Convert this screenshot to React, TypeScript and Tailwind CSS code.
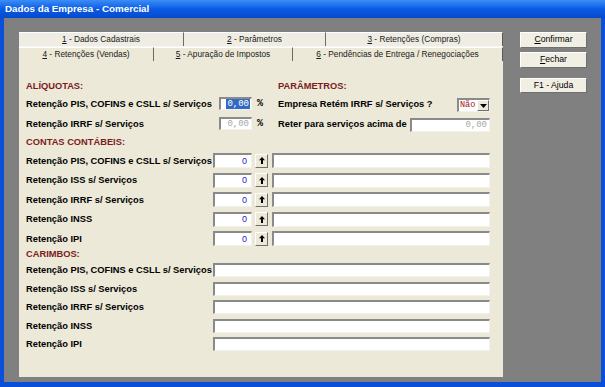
import React from 'react';

const sans = { fontFamily: '"Liberation Sans", Arial, sans-serif' };
const mono = { fontFamily: '"Liberation Mono", "Courier New", monospace' };

const sunken =
  'bg-white border-t-2 border-l-2 border-t-[#8a8a8a] border-l-[#8a8a8a] border-b border-r border-b-[#f2f1ea] border-r-[#f2f1ea]';
const raised =
  'bg-[#ECE9D8] border-t border-l border-t-white border-l-white border-b border-r border-b-[#6f6f6f] border-r-[#6f6f6f]';

const Header = ({ children }: { children: React.ReactNode }) => (
  <div className="h-[12px] leading-[12px] text-[9.3px] font-bold text-[#7b1c1c] whitespace-nowrap">{children}</div>
);

const Label = ({ children, w }: { children: React.ReactNode; w: string }) => (
  <div className={`${w} shrink-0 text-[9.3px] font-bold text-black whitespace-nowrap leading-[12px]`}>{children}</div>
);

const UpArrow = () => (
  <svg width="6" height="7" viewBox="0 0 6 7">
    <path d="M3 0 L6 3.3 H4 V7 H2 V3.3 H0 Z" fill="#000" />
  </svg>
);

const Tab = ({ n, text, w, last }: { n: string; text: string; w: string; last?: boolean }) => (
  <div
    className={`${w} h-full flex items-center justify-center text-[8.3px] text-[#1a1a1a] border-t border-t-white ${
      last ? 'border-r border-r-[#5a5a5a]' : 'border-r border-r-[#6a6a6a]'
    }`}
  >
    <span className="underline">{n}</span>
    <span>&nbsp;- {text}</span>
  </div>
);

const Button = ({ u, rest, h }: { u: string; rest: string; h: string }) => (
  <div className={`${raised} ${h} w-[67px] bg-[#F1EFE4] flex items-center justify-center text-[8.7px] text-black`}>
    <span className="underline">{u}</span>
    <span>{rest}</span>
  </div>
);

const contas = [
  'Retenção PIS, COFINS e CSLL s/ Serviços',
  'Retenção ISS s/ Serviços',
  'Retenção IRRF s/ Serviços',
  'Retenção INSS',
  'Retenção IPI',
];

export default function App() {
  return (
    <div className="w-[605px] h-[387px] flex flex-col bg-[#0A4FD8] overflow-hidden" style={sans}>
      {/* title bar */}
      <div className="h-[18px] shrink-0 bg-gradient-to-b from-[#3B8DF6] via-[#0A5BE6] to-[#0749CB] flex items-center pl-[5px]">
        <span className="text-white font-bold text-[9.8px] leading-none">Dados da Empresa - Comercial</span>
      </div>

      {/* client */}
      <div className="flex-1 flex ml-[4px] mr-[4px] mb-[5px] bg-[#808080] pl-[15px] pt-[14px]">
        {/* tab control */}
        <div className="w-[484px] flex flex-col h-[345px]">
          <div className="h-[15px] flex bg-[#EFEDE3] border-b border-b-[#f7f6f0]">
            <Tab n="1" text="Dados Cadastrais" w="w-[165px]" />
            <Tab n="2" text="Parâmetros" w="w-[142px]" />
            <Tab n="3" text="Retenções (Compras)" w="w-[177px]" last />
          </div>
          <div className="h-[14px] flex bg-[#ECE9D8]">
            <Tab n="4" text="Retenções (Vendas)" w="w-[135px]" />
            <Tab n="5" text="Apuração de Impostos" w="w-[139px]" />
            <Tab n="6" text="Pendências de Entrega /  Renegociações" w="w-[210px]" last />
          </div>

          {/* panel */}
          <div className="h-[316px] bg-[#ECE9D8] pl-[7px] pt-[19px] flex flex-col">
            {/* top section */}
            <div className="flex">
              <div className="w-[252px] flex flex-col">
                <Header>ALÍQUOTAS:</Header>
                <div className="flex items-center mt-[5px] h-[13px]">
                  <Label w="w-[193px]">Retenção PIS, COFINS e CSLL s/ Serviços</Label>
                  <div className={`${sunken} w-[33px] h-[13px] flex items-center justify-end pr-px`}>
                    <span className="bg-[#316AC5] text-white text-[9px] leading-[10px] px-px" style={mono}>
                      0,00
                    </span>
                  </div>
                  <span className="ml-[5px] text-[10px] font-bold" style={mono}>%</span>
                </div>
                <div className="flex items-center mt-[7px] h-[13px]">
                  <Label w="w-[193px]">Retenção IRRF s/ Serviços</Label>
                  <div className={`${sunken} w-[33px] h-[13px] flex items-center justify-end pr-[2px]`}>
                    <span className="text-[#a8a8a8] text-[9px] leading-[10px]" style={mono}>
                      0,00
                    </span>
                  </div>
                  <span className="ml-[5px] text-[10px] font-bold" style={mono}>%</span>
                </div>
              </div>

              <div className="w-[212px] flex flex-col">
                <Header>PARÂMETROS:</Header>
                <div className="flex items-center mt-[5px] h-[13px]">
                  <Label w="w-[179px]">Empresa Retém IRRF s/ Serviços ?</Label>
                  <div className={`${sunken} w-[33px] h-[14px] mt-[3px] flex items-center`}>
                    <span className="flex-1 text-[#a01010] text-[8.5px] leading-none pl-px" style={mono}>
                      Não
                    </span>
                    <div className={`${raised} w-[12px] h-full flex items-center justify-center`}>
                      <svg width="7" height="4" viewBox="0 0 7 4">
                        <path d="M0 0 H7 L3.5 4 Z" fill="#000" />
                      </svg>
                    </div>
                  </div>
                </div>
                <div className="flex items-center mt-[7px] h-[13px]">
                  <Label w="w-[132px]">Reter para serviços acima de</Label>
                  <div className={`${sunken} w-[80px] h-[14px] mt-[2px] flex items-center justify-end pr-[2px]`}>
                    <span className="text-[#a8a8a8] text-[9px] leading-[10px]" style={mono}>
                      0,00
                    </span>
                  </div>
                </div>
              </div>
            </div>

            {/* contas contabeis */}
            <div className="mt-[6px]">
              <Header>CONTAS CONTÁBEIS:</Header>
            </div>
            <div className="mt-[5px] flex flex-col gap-[4.5px]">
              {contas.map((c) => (
                <div key={c} className="flex items-center h-[15px]">
                  <Label w="w-[187px]">{c}</Label>
                  <div className={`${sunken} w-[39px] h-[15px] flex items-center justify-end pr-[4px]`}>
                    <span className="text-[#2424c4] text-[9px] leading-none">0</span>
                  </div>
                  <div className={`${raised} ml-[3px] w-[13px] h-[14px] flex items-center justify-center`}>
                    <UpArrow />
                  </div>
                  <div className={`${sunken} ml-[4px] w-[218px] h-[15px]`} />
                </div>
              ))}
            </div>

            {/* carimbos */}
            <div className="mt-[2px]">
              <Header>CARIMBOS:</Header>
            </div>
            <div className="mt-[3px] flex flex-col gap-[4.5px]">
              {contas.map((c) => (
                <div key={c} className="flex items-center h-[14px]">
                  <Label w="w-[187px]">{c}</Label>
                  <div className={`${sunken} w-[277px] h-[14px]`} />
                </div>
              ))}
            </div>
          </div>
        </div>

        {/* buttons */}
        <div className="ml-[17px] flex flex-col">
          <Button u="C" rest="onfirmar" h="h-[16px]" />
          <div className="mt-[4px]">
            <Button u="F" rest="echar" h="h-[16px]" />
          </div>
          <div className="mt-[10px]">
            <Button u="" rest="F1 - Ajuda" h="h-[15px]" />
          </div>
        </div>
      </div>
    </div>
  );
}
